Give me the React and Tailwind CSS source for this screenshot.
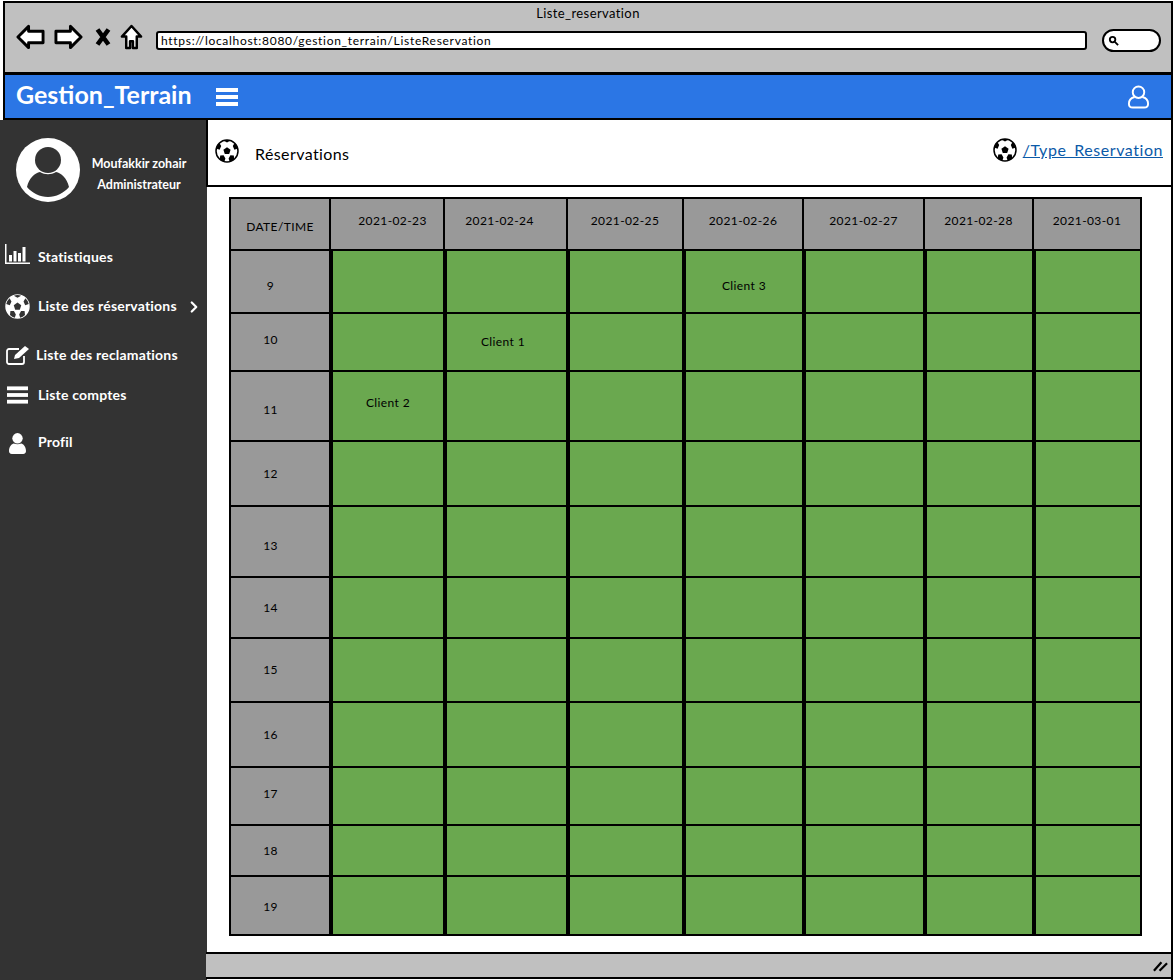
import React from 'react';
import { ChevronRight } from 'lucide-react';

const dates = [
  { label: '2021-02-23', cls: 'pl-[11px]' },
  { label: '2021-02-24', cls: 'pr-[12px]' },
  { label: '2021-02-25', cls: '' },
  { label: '2021-02-26', cls: '' },
  { label: '2021-02-27', cls: '' },
  { label: '2021-02-28', cls: '' },
  { label: '2021-03-01', cls: '' },
];

// the hand-drawn labels sit a little off the middle of their row
const hours = [
  { h: 9, cls: 'pt-[9px]' },
  { h: 10, cls: 'pb-[4px]' },
  { h: 11, cls: 'pt-[8px]' },
  { h: 12, cls: '' },
  { h: 13, cls: 'pt-[8px]' },
  { h: 14, cls: '' },
  { h: 15, cls: '' },
  { h: 16, cls: '' },
  { h: 17, cls: 'pb-[4px]' },
  { h: 18, cls: '' },
  { h: 19, cls: 'pt-[3px]' },
];

const clients = {
  '9-3': { name: 'Client 3', cls: 'pt-[9px]' },
  '10-1': { name: 'Client 1', cls: 'pr-[7px]' },
  '11-0': { name: 'Client 2', cls: 'pb-[6px]' },
};

function Ball({ className = '', light = false }) {
  const fg = light ? '#333333' : '#000000';
  const ring = light ? '#ffffff' : '#000000';
  return (
    <svg viewBox="0 0 24 24" className={className}>
      <circle cx="12" cy="12" r="11" fill="#ffffff" stroke={ring} strokeWidth="1.5" />
      <path d="M12 8.2l3.6 2.6-1.4 4.2H9.8l-1.4-4.2z" fill={fg} />
      <path d="M8.5 1.6L12 3.6l3.5-2a11 11 0 0 0-7 0z" fill={fg} />
      <path d="M22.8 9.5l-3.4 1.2-1.6-3.6 1.8-3a11 11 0 0 1 3.2 5.4z" fill={fg} />
      <path d="M1.2 9.5l3.4 1.2 1.6-3.6-1.8-3a11 11 0 0 0-3.2 5.4z" fill={fg} />
      <path d="M4.8 20.2l.4-3.8 3.4-.2 1.8 3.4-1 3.2a11 11 0 0 1-4.6-2.6z" fill={fg} />
      <path d="M19.2 20.2l-.4-3.8-3.4-.2-1.8 3.4 1 3.2a11 11 0 0 0 4.6-2.6z" fill={fg} />
    </svg>
  );
}

function Burger({ className = '' }) {
  return (
    <svg viewBox="0 0 22 18" className={className} fill="currentColor">
      <rect x="0" y="0" width="22" height="4" />
      <rect x="0" y="7" width="22" height="4" />
      <rect x="0" y="14" width="22" height="4" />
    </svg>
  );
}

function NavRow({ icon, label, extra, className = '' }) {
  return (
    <div className={`flex items-center text-white font-bold text-[14px] tracking-[0.2px] ${className}`}>
      {icon}
      <span>{label}</span>
      {extra}
    </div>
  );
}

export default function App() {
  return (
    <div className="w-[1175px] h-[980px] bg-white flex flex-col overflow-hidden text-black" style={{ fontFamily: '"Lato", "Liberation Sans", sans-serif' }}>
      {/* Browser bar */}
      <div className="h-[73px] ml-[3px] mr-[2px] mt-px bg-[#c0c0c0] border-2 border-black flex flex-col shrink-0">
        <div className="text-center text-[13px] leading-4 mt-[2px] tracking-[0.4px]">Liste_reservation</div>
        <div className="flex items-start pl-[11px] mt-[3px]">
          <svg viewBox="0 0 30 26" className="w-[29px] h-[26px]" fill="#fff" stroke="#000" strokeWidth="3" strokeLinejoin="round">
            <path d="M2 13L13 2v5h15v12H13v5z" />
          </svg>
          <svg viewBox="0 0 30 26" className="w-[29px] h-[26px] ml-[9px]" fill="#fff" stroke="#000" strokeWidth="3" strokeLinejoin="round">
            <path d="M28 13L17 2v5H2v12h15v5z" />
          </svg>
          <svg viewBox="0 0 16 18" className="w-[16px] h-[18px] ml-[12px] mt-[4px]" stroke="#000" strokeWidth="4.6">
            <path d="M2.5 1.5l11 15M13.5 1.5l-11 15" />
          </svg>
          <svg viewBox="0 0 24 28" className="w-[23px] h-[27px] ml-[9px]" fill="#fff" stroke="#000" strokeWidth="2.6" strokeLinejoin="round">
            <path d="M12 2L2 13h4.5v12h4v-7h3v7h4V13H22z" />
          </svg>
          <div className="ml-[13px] mt-[7px] w-[931px] h-[19px] bg-white border-2 border-black rounded-[3px] text-[12px] leading-[14px] pl-[3px] tracking-[0.7px] flex items-center">
            https://localhost:8080/gestion_terrain/ListeReservation
          </div>
          <div className="ml-[15px] mt-[5px] w-[59px] h-[23px] bg-white border-2 border-black rounded-full flex items-center pl-[4px]">
            <svg viewBox="0 0 12 12" className="w-[11px] h-[11px]" fill="none" stroke="#000" strokeWidth="2">
              <circle cx="5" cy="5" r="3" />
              <path d="M7.5 7.5L11 11" />
            </svg>
          </div>
        </div>
      </div>

      {/* Top bar */}
      <div className="h-[47px] ml-[3px] mr-[2px] -mt-px bg-[#2b76e5] border-2 border-black flex items-center shrink-0 text-white">
        <span className="ml-[11px] pb-[4px] text-[25px] font-bold leading-none">Gestion_Terrain</span>
        <Burger className="w-[22px] h-[18px] ml-[24px]" />
        <svg viewBox="0 0 24 26" className="w-[23px] h-[26px] ml-auto mr-[21px]" fill="none" stroke="#fff" strokeWidth="2">
          <circle cx="12" cy="8" r="6" />
          <path d="M8 13c-4 1-6 4-6 7 0 3 2 4 4 4h12c2 0 4-1 4-4 0-3-2-6-6-7" />
        </svg>
      </div>

      <div className="flex flex-1 min-h-0">
        {/* Sidebar */}
        <aside className="w-[207px] bg-[#333333] shrink-0 flex flex-col">
          <div className="flex pl-[16px] pt-[18px]">
            <svg viewBox="0 0 64 64" className="w-[64px] h-[64px] shrink-0">
              <circle cx="32" cy="32" r="32" fill="#fff" />
              <circle cx="32" cy="22" r="13" fill="#333" />
              <path d="M11 49c2-9 8-14 13-15 5 3 11 3 16 0 5 1 11 6 13 15-5 6-13 10-21 10s-16-4-21-10z" fill="#333" />
            </svg>
            <div className="ml-[7px] text-white font-bold text-[12.5px] text-center leading-[21px] pt-[15px] w-[104px]">
              <div>Moufakkir zohair</div>
              <div>Administrateur</div>
            </div>
          </div>
          <NavRow
            className="mt-[40px] pl-[5px] h-[28px]"
            label="Statistiques"
            icon={
              <svg viewBox="0 0 25 20" className="w-[25px] h-[20px] mr-[8px] -mt-[4px]" fill="#fff">
                <path d="M0 0h1.500v18.500H25V20H0z" />
                <rect x="4" y="11" width="3" height="6.500" />
                <rect x="8.500" y="7" width="3" height="10.500" />
                <rect x="13" y="9" width="3" height="8.500" />
                <rect x="17.500" y="3" width="3" height="14.500" />
              </svg>
            }
          />
          <NavRow
            className="mt-[21px] pl-[5px] h-[28px]"
            label="Liste des réservations"
            icon={<Ball light className="w-[25px] h-[25px] mr-[8px] mt-[3px] shrink-0" />}
            extra={<ChevronRight className="w-[18px] h-[18px] ml-[8px] mt-[4px]" strokeWidth={3} />}
          />
          <NavRow
            className="mt-[21px] pl-[6px] h-[28px]"
            label="Liste des reclamations"
            icon={
              <svg viewBox="0 0 25 20" className="w-[25px] h-[20px] mr-[5px] mt-[2px] shrink-0" fill="none" stroke="#fff" strokeWidth="1.800">
                <path d="M18 11v6a2 2 0 0 1-2 2H3a2 2 0 0 1-2-2V6a2 2 0 0 1 2-2h10" />
                <path d="M8 14l1-4L19 1l4 3-10 9z" fill="#fff" stroke="none" />
              </svg>
            }
          />
          <NavRow
            className="mt-[12px] pl-[7px] h-[28px]"
            label="Liste comptes"
            icon={<Burger className="w-[21px] h-[18px] mr-[10px] mt-[2px] shrink-0" />}
          />
          <NavRow
            className="mt-[19px] pl-[9px] h-[28px]"
            label="Profil"
            icon={
              <svg viewBox="0 0 18 22" className="w-[17px] h-[21px] mr-[12px] mt-[5px] shrink-0" fill="#fff">
                <circle cx="9" cy="5.500" r="5.500" />
                <path d="M0 19c0-5 3-7.500 5-8 2.400 1 5.600 1 8 0 2 .5 5 3 5 8 0 2-1 3-3 3H3c-2 0-3-1-3-3z" />
              </svg>
            }
          />
        </aside>

        {/* Content */}
        <main className="flex-1 flex flex-col min-w-0 border-r-2 border-black mr-[2px] -ml-px">
          <div className="h-[67px] border-2 border-t-0 border-r-0 border-black bg-white flex items-start shrink-0">
            <Ball className="w-[24px] h-[24px] ml-[7px] mt-[19px]" />
            <span className="ml-[16px] mt-[24px] text-[16px] leading-5 tracking-[0.4px]">Réservations</span>
            <Ball className="w-[24px] h-[24px] ml-auto mt-[18px]" />
            <a className="ml-[6px] mr-[8px] mt-[20px] text-[16px] leading-5 text-[#0b5aa8] underline tracking-[0.55px]">/Type_Reservation</a>
          </div>

          <div className="flex-1 pl-[23px] pt-[10px]">
            <div className="w-[913px] h-[739px] border-2 border-black grid grid-cols-[98px_112px_121px_114px_118px_119px_107px_1fr] grid-rows-[50px_61px_56px_68px_63px_69px_59px_62px_63px_56px_49px_1fr] bg-black gap-x-[2px] gap-y-[2px] text-[12px] tracking-[0.4px]">
              <div className="bg-[#999999] flex items-center justify-center pt-[5px]">DATE/TIME</div>
              {dates.map((d) => (
                <div key={d.label} className={`bg-[#999999] flex items-center justify-center pb-[6px] ${d.cls}`}>{d.label}</div>
              ))}
              {hours.map((row) => (
                <React.Fragment key={row.h}>
                  <div className={`bg-[#999999] flex items-center justify-center pr-[19px] ${row.cls}`}>{row.h}</div>
                  {dates.map((d, i) => {
                    const client = clients[`${row.h}-${i}`];
                    return (
                      <div key={d.label} className={`bg-[#6aa84f] border-l-2 border-black flex items-center justify-center ${client ? client.cls : ''}`}>
                        {client ? client.name : null}
                      </div>
                    );
                  })}
                </React.Fragment>
              ))}
            </div>
          </div>

          {/* Footer */}
          <div className="h-[27px] bg-[#c0c0c0] border-y-2 border-black mb-[1px] flex items-center justify-end pr-[3px] shrink-0">
            <svg viewBox="0 0 16 12" className="w-[15px] h-[12px]" stroke="#000" strokeWidth="2.400">
              <path d="M1 11L9 2M7 11l8-8" />
            </svg>
          </div>
        </main>
      </div>
    </div>
  );
}
